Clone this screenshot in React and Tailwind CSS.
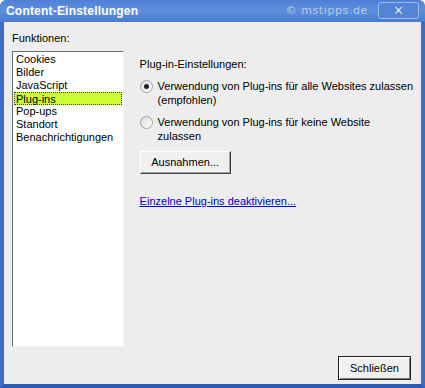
import React from 'react';

const items = ['Cookies', 'Bilder', 'JavaScript', 'Plug-ins', 'Pop-ups', 'Standort', 'Benachrichtigungen'];

const Radio = ({ checked }) => (
    <div className="w-[13px] h-[13px] rounded-full border border-[#a0a0a0] bg-gradient-to-br from-[#dcdcdc] to-white flex items-center justify-center shrink-0 mt-[1px]">
        {checked && <div className="w-[5px] h-[5px] rounded-full bg-[#202020]" />}
    </div>
);

const App = () => {
    return (
        <div className="w-[425px] h-[388px] flex flex-col text-[11px] text-black" style={{ fontFamily: '"Liberation Sans", Arial, sans-serif' }}>
            {/* Title bar */}
            <div className="h-[22px] shrink-0 flex items-center pl-[6px] pr-[6px] rounded-t-[6px] bg-gradient-to-b from-[#4f80d6] via-[#5f8fdc] to-[#4a7ad0]">
                <span className="font-bold text-white text-[12px] tracking-[0.2px]">Content-Einstellungen</span>
                <span className="ml-auto mr-[10px] text-[#b9c9e4] text-[11px] tracking-[0.6px]" style={{ fontFamily: '"DejaVu Sans", sans-serif' }}>© mstipps.de</span>
                <div className="w-[41px] h-[17px] mb-[2px] rounded-[3px] border border-[#9fb8e8] bg-[#5284d8] flex items-center justify-center">
                    <span className="text-[#e4ecfa] text-[13px] leading-none" style={{ textShadow: '0 0 1px #203c80' }}>✕</span>
                </div>
            </div>

            {/* Client area */}
            <div className="flex-1 flex flex-col bg-[#ededed] border-x-4 border-b-4 border-x-[#3d6bc8] border-b-[#2d5cb8] px-[8px] pt-[10px] pb-[4px]">
                <div className="leading-[13px] mb-[6px]">Funktionen:</div>
                <div className="flex flex-1 min-h-0">
                    <div className="w-[114px] h-[296px] bg-white border border-t-[#6e6e6e] border-l-[#6e6e6e] border-r-[#f5f5f5] border-b-[#f5f5f5] pt-[1px] px-[1px]">
                        {items.map((item) => (
                            <div
                                key={item}
                                className={
                                    item === 'Plug-ins'
                                        ? 'h-[13px] leading-[12px] px-[1px] bg-[#ccfc34] border border-dotted border-[#3030a0]'
                                        : 'h-[13px] leading-[13px] px-[2px]'
                                }
                            >
                                {item}
                            </div>
                        ))}
                    </div>
                    <div className="flex-1 pl-[16px] pt-[7px]">
                        <div className="leading-[13px] mb-[8px]">Plug-in-Einstellungen:</div>
                        <div className="flex gap-[5px] mb-[8px]">
                            <Radio checked />
                            <div className="leading-[14px] whitespace-nowrap">
                                Verwendung von Plug-ins für alle Websites zulassen<br />(empfohlen)
                            </div>
                        </div>
                        <div className="flex gap-[5px] mb-[8px]">
                            <Radio />
                            <div className="leading-[14px] whitespace-nowrap">
                                Verwendung von Plug-ins für keine Website<br />zulassen
                            </div>
                        </div>
                        <button className="w-[91px] h-[23px] bg-[#f0f0f0] border border-t-white border-l-white border-r-[#404040] border-b-[#404040] shadow-[inset_-1px_-1px_0_#a0a0a0]">
                            Ausnahmen...
                        </button>
                        <div className="mt-[21px] text-[#0000cc] underline leading-[13px]">Einzelne Plug-ins deaktivieren...</div>
                    </div>
                </div>
                <div className="flex justify-end pr-[2px]">
                    <button className="w-[73px] h-[24px] bg-[#f0f0f0] border border-[#202020] shadow-[inset_1px_1px_0_#ffffff,inset_-1px_-1px_0_#808080]">
                        Schließen
                    </button>
                </div>
            </div>
        </div>
    );
};

export default App;
